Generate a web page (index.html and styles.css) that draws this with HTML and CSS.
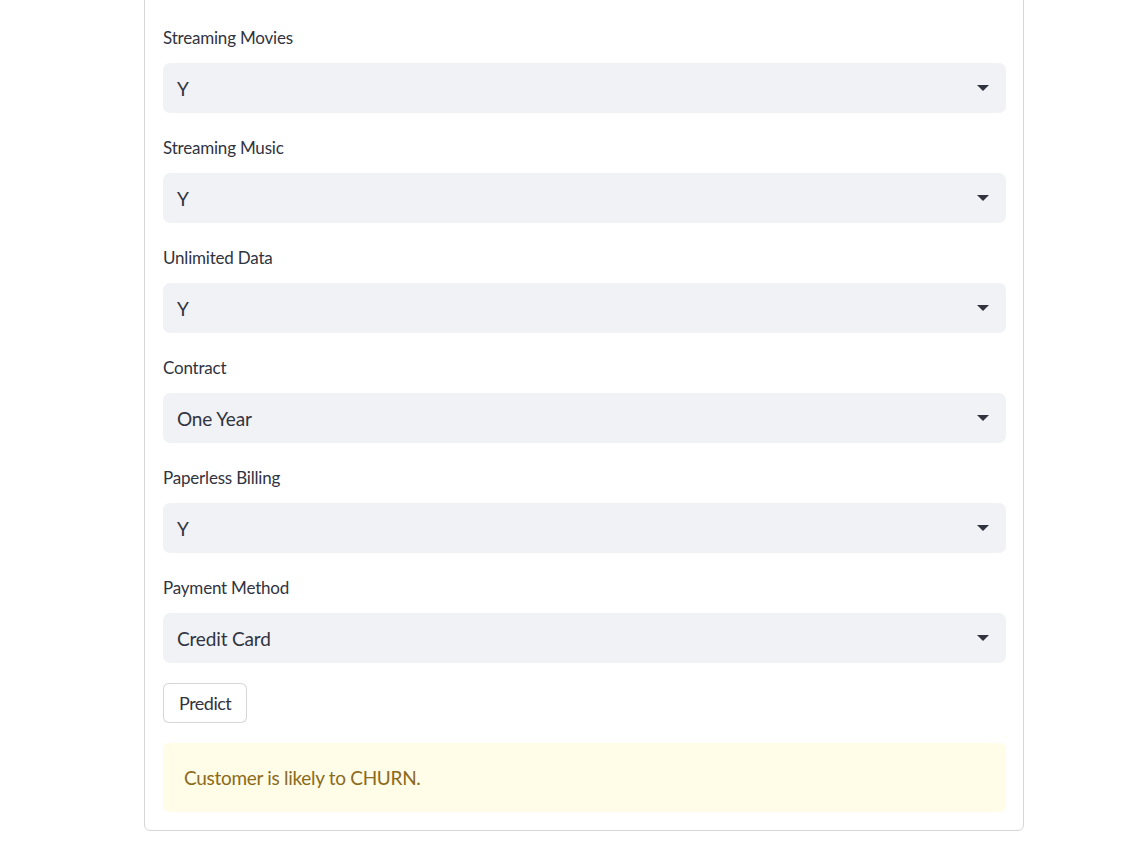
FILE: index.html
```html
<!DOCTYPE html>
<html lang="en">
<head>
<meta charset="utf-8">
<title>Churn Prediction</title>
<link rel="stylesheet" href="styles.css">
</head>
<body>
<main class="page">
  <form class="form" onsubmit="return false;">
    <div class="widget">
      <label class="label">Streaming Movies</label>
      <div class="select"><span class="value">Y</span><svg class="caret" width="12" height="6" viewBox="0 0 12 6"><path d="M0 0h12L6 6z" fill="#31333f"/></svg></div>
    </div>
    <div class="widget">
      <label class="label">Streaming Music</label>
      <div class="select"><span class="value">Y</span><svg class="caret" width="12" height="6" viewBox="0 0 12 6"><path d="M0 0h12L6 6z" fill="#31333f"/></svg></div>
    </div>
    <div class="widget">
      <label class="label">Unlimited Data</label>
      <div class="select"><span class="value">Y</span><svg class="caret" width="12" height="6" viewBox="0 0 12 6"><path d="M0 0h12L6 6z" fill="#31333f"/></svg></div>
    </div>
    <div class="widget">
      <label class="label">Contract</label>
      <div class="select"><span class="value">One Year</span><svg class="caret" width="12" height="6" viewBox="0 0 12 6"><path d="M0 0h12L6 6z" fill="#31333f"/></svg></div>
    </div>
    <div class="widget">
      <label class="label">Paperless Billing</label>
      <div class="select"><span class="value">Y</span><svg class="caret" width="12" height="6" viewBox="0 0 12 6"><path d="M0 0h12L6 6z" fill="#31333f"/></svg></div>
    </div>
    <div class="widget">
      <label class="label">Payment Method</label>
      <div class="select"><span class="value">Credit Card</span><svg class="caret" width="12" height="6" viewBox="0 0 12 6"><path d="M0 0h12L6 6z" fill="#31333f"/></svg></div>
    </div>
    <div class="actions">
      <button class="btn" type="button">Predict</button>
    </div>
    <div class="alert">Customer is likely to CHURN.</div>
  </form>
</main>
</body>
</html>
```
FILE: styles.css
```css
html, body {
  margin: 0;
  padding: 0;
  background: #ffffff;
}
body {
  font-family: "Source Sans Pro", "Lato", "Noto Sans", sans-serif;
  color: #31333f;
  overflow: hidden;
}
.page {
  padding-left: 144px;
}
.form {
  width: 880px;
  box-sizing: border-box;
  margin-top: -20px;
  border: 1px solid rgba(49, 51, 63, 0.2);
  border-radius: 6px;
  padding: 42px 17px 18px 18px;
  display: flex;
  flex-direction: column;
  gap: 20px;
}
.widget {
  display: flex;
  flex-direction: column;
}
.label {
  display: block;
  font-size: 17px;
  letter-spacing: -0.2px;
  line-height: 22px;
  padding-top: 4px;
  height: 26px;
  margin-bottom: 14px;
  box-sizing: border-box;
}
.select {
  height: 50px;
  background: #f0f2f6;
  border-radius: 7px;
  display: flex;
  align-items: center;
  justify-content: space-between;
  padding: 0 17px 0 14px;
}
.value {
  font-size: 19px;
  letter-spacing: -0.15px;
}
.caret {
  display: block;
}
.actions {
  display: flex;
}
.btn {
  height: 40px;
  padding: 0 15px;
  background: #ffffff;
  border: 1px solid rgba(49, 51, 63, 0.2);
  border-radius: 6px;
  font-family: inherit;
  font-size: 18px;
  letter-spacing: -0.5px;
  color: #31333f;
}
.alert {
  height: 69px;
  box-sizing: border-box;
  background: #fffce7;
  border-radius: 6px;
  color: #8b6a1c;
  font-size: 19px;
  letter-spacing: -0.3px;
  display: flex;
  align-items: center;
  padding: 0 21px;
}
```
